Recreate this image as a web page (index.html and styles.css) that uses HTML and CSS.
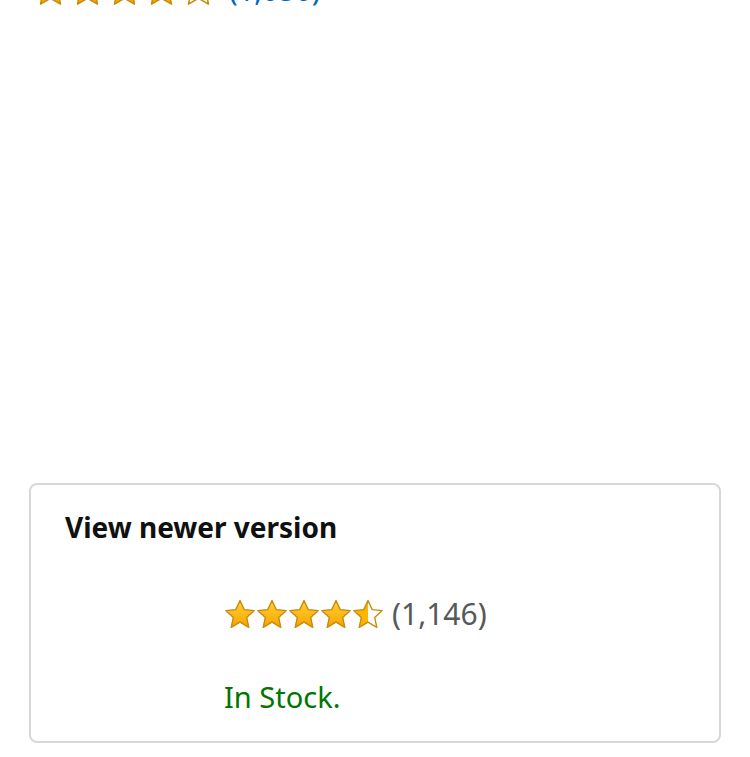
FILE: index.html
```html
<!DOCTYPE html>
<html lang="en">
<head>
    <meta charset="UTF-8">
    <meta name="viewport" content="width=device-width, initial-scale=1.0">
    <title>Product</title>
    <link rel="stylesheet" href="styles.css">
</head>
<body>
    <svg width="0" height="0" class="defs">
        <defs>
            <linearGradient id="starFill" x1="0" y1="0" x2="0" y2="1">
                <stop offset="0" stop-color="#ffd23a"/>
                <stop offset="1" stop-color="#f7a300"/>
            </linearGradient>
            <linearGradient id="halfFill" x1="0" y1="0" x2="1" y2="0">
                <stop offset="0.5" stop-color="#fbb600"/>
                <stop offset="0.5" stop-color="#ffffff"/>
            </linearGradient>
            <symbol id="star" viewBox="0 0 32 30">
                <polygon points="16,1.5 20.2,10.6 30.2,11.6 22.7,18.4 24.8,28.3 16,23.2 7.2,28.3 9.3,18.4 1.8,11.6 11.8,10.6" stroke="#c98b0a" stroke-width="1.4" stroke-linejoin="round"/>
            </symbol>
        </defs>
    </svg>

    <div class="top-rating">
        <div class="stars big">
            <svg class="star"><use href="#star" fill="url(#starFill)"/></svg>
            <svg class="star"><use href="#star" fill="url(#starFill)"/></svg>
            <svg class="star"><use href="#star" fill="url(#starFill)"/></svg>
            <svg class="star"><use href="#star" fill="url(#starFill)"/></svg>
            <svg class="star"><use href="#star" fill="#fff"/></svg>
        </div>
        <span class="count-link">(1,050)</span>
    </div>

    <div class="card">
        <h2 class="card-title">View newer version</h2>
        <div class="card-body">
            <div class="rating">
                <div class="stars">
                    <svg class="star"><use href="#star" fill="url(#starFill)"/></svg>
                    <svg class="star"><use href="#star" fill="url(#starFill)"/></svg>
                    <svg class="star"><use href="#star" fill="url(#starFill)"/></svg>
                    <svg class="star"><use href="#star" fill="url(#starFill)"/></svg>
                    <svg class="star"><use href="#star" fill="url(#halfFill)"/></svg>
                </div>
                <span class="count">(1,146)</span>
            </div>
            <div class="stock">In Stock.</div>
        </div>
    </div>
</body>
</html>
```

FILE: styles.css
```css
body {
    font-family: "Noto Sans", "Open Sans", Arial, sans-serif;
    margin: 0;
    background-color: #ffffff;
    color: #0f1111;
}

.defs {
    position: absolute;
}

.top-rating {
    display: flex;
    align-items: center;
    margin-top: -28px;
    margin-left: 32px;
    height: 34px;
}

.stars {
    display: flex;
}

.star {
    width: 32px;
    height: 30px;
}

.stars.big .star {
    width: 37px;
    height: 34px;
}

.count-link {
    margin-left: 12px;
    font-size: 29px;
    color: #0066c0;
}

.card {
    margin: 477px 29px 0 29px;
    height: 256px;
    border: 2px solid #d5d9d9;
    border-radius: 8px;
    padding: 0 34px;
}

.card-title {
    margin: 23px 0 0 0;
    font-size: 28px;
    font-weight: 700;
    line-height: 38px;
}

.card-body {
    margin-left: 159px;
    margin-top: 50px;
}

.rating {
    display: flex;
    align-items: center;
}

.count {
    margin-left: 8px;
    font-size: 30px;
    line-height: 36px;
    color: #565959;
}

.stock {
    margin-top: 46px;
    font-size: 29px;
    line-height: 38px;
    color: #007600;
}
```
